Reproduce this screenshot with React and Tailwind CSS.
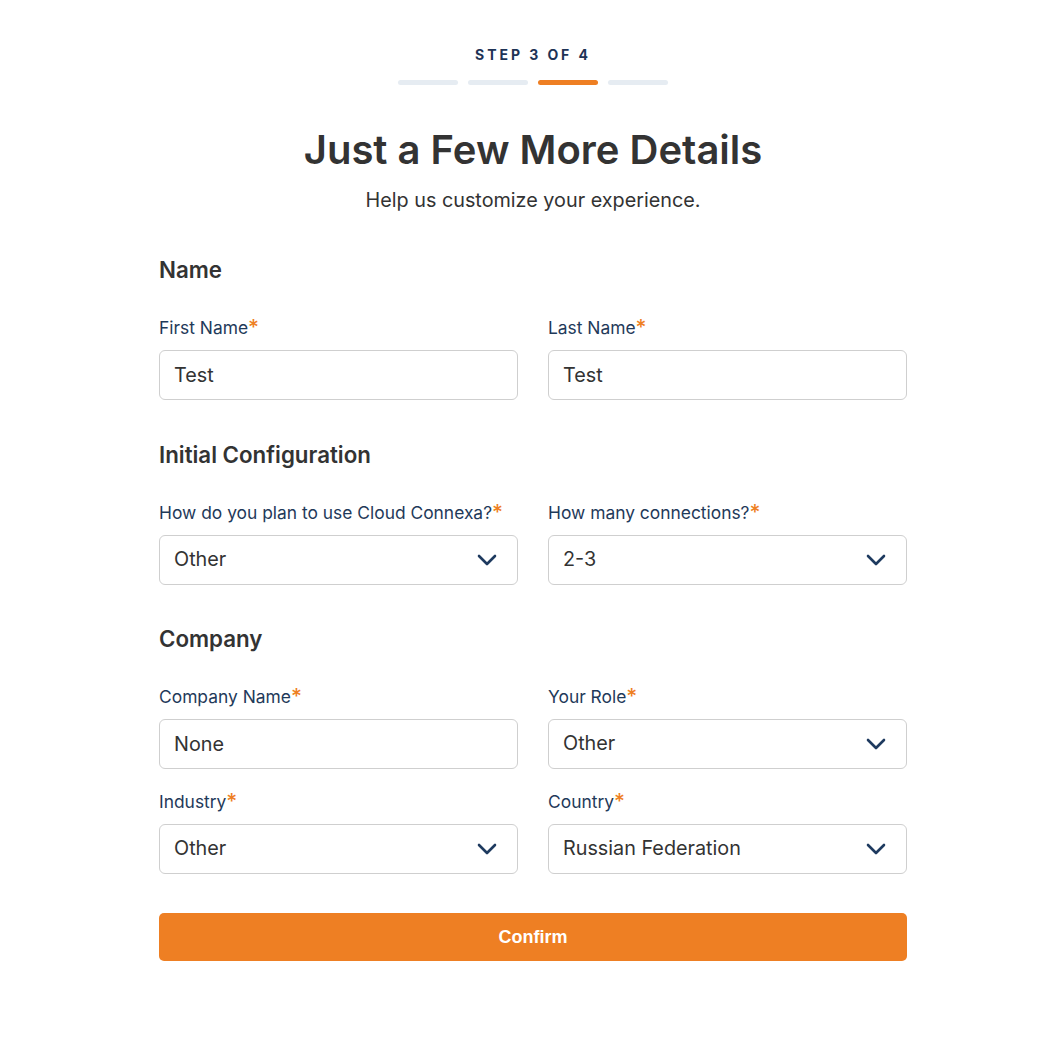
import { useState } from 'react';

const font = { fontFamily: 'Inter, "Noto Sans", sans-serif' };

function Chevron() {
  return (
    <svg width="20" height="12" viewBox="0 0 20 12" fill="none" className="shrink-0">
      <path d="M2 2l8 8 8-8" stroke="#1e3a5f" strokeWidth="2.6" strokeLinecap="round" strokeLinejoin="round" />
    </svg>
  );
}

function Label({ children }) {
  return (
    <div className="h-6 mt-[1px] text-[17.4px] leading-6 text-[#1f3a5a] mb-[10px] flex items-start">
      {children}
      <span className="text-[#ee7f23] text-[21px] leading-6 font-medium">*</span>
    </div>
  );
}

function TextField({ label, value }) {
  const [v, setV] = useState(value);
  return (
    <div>
      <Label>{label}</Label>
      <input
        value={v}
        onChange={(e) => setV(e.target.value)}
        className="w-full h-[50px] border border-[#cfcfcf] rounded-md px-[14px] text-[19.8px] text-[#333] outline-none"
        style={font}
      />
    </div>
  );
}

function SelectField({ label, value }) {
  return (
    <div>
      <Label>{label}</Label>
      <div className="w-full h-[50px] border border-[#cfcfcf] rounded-md pl-[14px] pr-[20px] flex items-center justify-between">
        <span className="text-[19.8px] text-[#333]">{value}</span>
        <Chevron />
      </div>
    </div>
  );
}

export default function App() {
  return (
    <div className="min-h-screen bg-white flex justify-center pl-[14px]" style={font}>
      <div className="w-[748px] pt-[45px] pb-20">
        <div className="text-center text-[14px] leading-5 font-bold tracking-[0.21em] text-[#1e3356]">
          STEP 3 OF 4
        </div>
        <div className="flex justify-center gap-[10px] mt-[15px]">
          <div className="w-[60px] h-[5px] rounded-full bg-[#e6ecf2]" />
          <div className="w-[60px] h-[5px] rounded-full bg-[#e6ecf2]" />
          <div className="w-[60px] h-[5px] rounded-full bg-[#ee7f23]" />
          <div className="w-[60px] h-[5px] rounded-full bg-[#e6ecf2]" />
        </div>
        <h1 className="text-center text-[40px] leading-[48px] font-semibold text-[#333] mt-[41px]">
          Just a Few More Details
        </h1>
        <p className="text-center text-[19.8px] leading-7 text-[#333] mt-[12px]">
          Help us customize your experience.
        </p>

        {/* Name */}
        <div className="mt-[42px]">
          <h2 className="text-[22.3px] leading-7 font-semibold text-[#333] mb-[31px]">Name</h2>
          <div className="grid grid-cols-2 gap-x-[30px]">
            <TextField label="First Name" value="Test" />
            <TextField label="Last Name" value="Test" />
          </div>
        </div>

        {/* Initial configuration */}
        <div className="mt-[41px]">
          <h2 className="text-[22.3px] leading-7 font-semibold text-[#333] mb-[31px]">Initial Configuration</h2>
          <div className="grid grid-cols-2 gap-x-[30px]">
            <SelectField label="How do you plan to use Cloud Connexa?" value="Other" />
            <SelectField label="How many connections?" value="2-3" />
          </div>
        </div>

        {/* Company */}
        <div className="mt-[40px]">
          <h2 className="text-[22.3px] leading-7 font-semibold text-[#333] mb-[31px]">Company</h2>
          <div className="grid grid-cols-2 gap-x-[30px] gap-y-[20px]">
            <TextField label="Company Name" value="None" />
            <SelectField label="Your Role" value="Other" />
            <SelectField label="Industry" value="Other" />
            <SelectField label="Country" value="Russian Federation" />
          </div>
        </div>

        <button
          className="w-full h-[48px] mt-[39px] rounded-[5px] bg-[#ee7f23] text-white text-[18px] font-bold"
          style={{ fontFamily: '"Liberation Sans", Arial, sans-serif' }}
        >
          Confirm
        </button>
      </div>
    </div>
  );
}
